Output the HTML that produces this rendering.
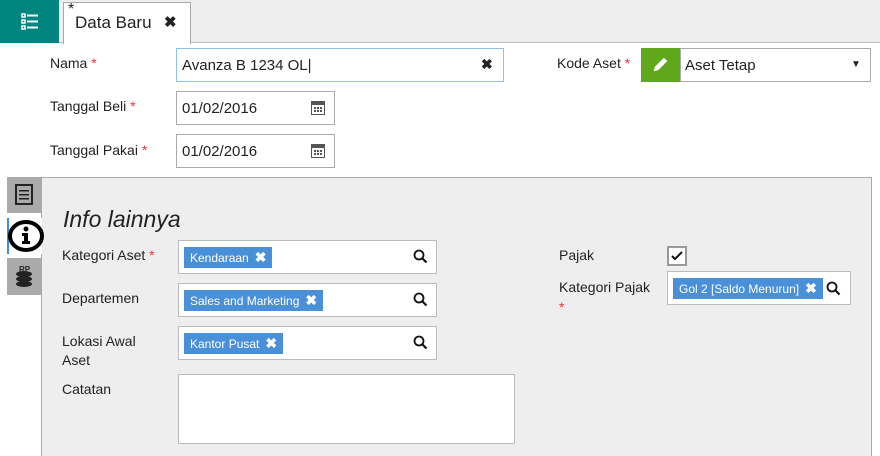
<!DOCTYPE html><html><head><style>
*{box-sizing:border-box;margin:0;padding:0}
html,body{width:880px;height:456px;overflow:hidden}
body{background:#fff;font-family:"Liberation Sans",sans-serif;font-size:14px;color:#222;position:relative}
.a{position:absolute}
.lbl{position:absolute;font-size:14px;color:#222}
.req{color:#e33}
.inp{position:absolute;background:#fff;border:1px solid #bbb}
.tag{position:absolute;background:#4a90d9;color:#fff;font-size:12px;height:21px;line-height:21px;padding:0 6px;white-space:nowrap}
.tag b{font-size:14px;margin-left:6px}
</style></head><body>
<div class="a" style="left:0;top:0;width:880px;height:43px;background:#eee;border-bottom:1px solid #bbb"></div>
<div class="a" style="left:0;top:0;width:59px;height:43px;background:#00847f">
<svg class="a" style="left:21px;top:13px" width="18" height="17" viewBox="0 0 18 17"><g fill="none" stroke="#fff" stroke-width="1.5"><rect x="1" y="1" width="3" height="3"/><rect x="1" y="7" width="3" height="3"/><rect x="1" y="13" width="3" height="3"/></g><g fill="#fff"><rect x="6" y="1.5" width="11" height="2"/><rect x="6" y="7.5" width="11" height="2"/><rect x="6" y="13.5" width="11" height="2"/></g></svg></div>
<div class="a" style="left:63px;top:2px;width:128px;height:42px;background:#fff;border:1px solid #aaa;border-bottom:none"></div>
<div class="a" style="left:68px;top:1px;font-size:16px">*</div>
<div class="a" style="left:75px;top:13px;font-size:17px;color:#222">Data Baru</div>
<div class="a" style="left:164px;top:13px;font-size:15px;font-weight:bold">✖</div>

<div class="lbl" style="left:50px;top:55px">Nama <span class="req">*</span></div>
<div class="inp" style="left:176px;top:48px;width:328px;height:34px;border-color:#8ec1ee"></div>
<div class="a" style="left:182px;top:57px;font-size:15px">Avanza B 1234 OL<span style="font-weight:100">|</span></div>
<div class="a" style="left:481px;top:56px;font-size:14px;font-weight:bold">✖</div>

<div class="lbl" style="left:50px;top:98px">Tanggal Beli <span class="req">*</span></div>
<div class="inp" style="left:176px;top:91px;width:159px;height:34px;border-color:#aaa"></div>
<div class="a" style="left:182px;top:100px;font-size:15px">01/02/2016</div>
<div class="lbl" style="left:50px;top:142px">Tanggal Pakai <span class="req">*</span></div>
<div class="inp" style="left:176px;top:134px;width:159px;height:34px;border-color:#aaa"></div>
<div class="a" style="left:182px;top:143px;font-size:15px">01/02/2016</div>
<svg class="a" style="left:311px;top:100px" width="14" height="15"><rect x="0.5" y="1.5" width="13" height="13" fill="#fff" stroke="#555"/><rect x="0" y="1" width="14" height="4" fill="#555"/><g fill="#555"><rect x="3" y="7" width="2" height="2"/><rect x="6" y="7" width="2" height="2"/><rect x="9" y="7" width="2" height="2"/><rect x="3" y="10" width="2" height="2"/><rect x="6" y="10" width="2" height="2"/><rect x="9" y="10" width="2" height="2"/></g></svg>
<svg class="a" style="left:311px;top:143px" width="14" height="15"><rect x="0.5" y="1.5" width="13" height="13" fill="#fff" stroke="#555"/><rect x="0" y="1" width="14" height="4" fill="#555"/><g fill="#555"><rect x="3" y="7" width="2" height="2"/><rect x="6" y="7" width="2" height="2"/><rect x="9" y="7" width="2" height="2"/><rect x="3" y="10" width="2" height="2"/><rect x="6" y="10" width="2" height="2"/><rect x="9" y="10" width="2" height="2"/></g></svg>

<div class="lbl" style="left:557px;top:55px">Kode Aset <span class="req">*</span></div>
<div class="a" style="left:641px;top:48px;width:40px;height:34px;background:#5fa81c"></div>
<svg class="a" style="left:652px;top:56px" width="17" height="17" viewBox="0 0 15 15"><path d="M1.5 13.5 L2.5 9.5 L10.5 1.5 L13.5 4.5 L5.5 12.5 Z" fill="#fff"/></svg>
<div class="inp" style="left:680px;top:48px;width:191px;height:34px;border-color:#aaa"></div>
<div class="a" style="left:685px;top:57px;font-size:15px">Aset Tetap</div>
<div class="a" style="left:851px;top:59px;font-size:10px">▼</div>

<div class="a" style="left:41px;top:177px;width:831px;height:300px;background:#eee;border:1px solid #aaa"></div>
<div class="a" style="left:7px;top:177px;width:34px;height:36px;background:#aaa"></div>
<svg class="a" style="left:15px;top:184px" width="18" height="21"><rect x="1" y="1" width="16" height="19" fill="none" stroke="#222" stroke-width="2"/><g fill="#222"><rect x="4" y="6" width="10" height="1.5"/><rect x="4" y="10" width="10" height="1.5"/><rect x="4" y="14" width="10" height="1.5"/></g></svg>
<div class="a" style="left:7px;top:218px;width:35px;height:36px;background:#fff;border-left:2px solid #3a8fd9"></div>
<svg class="a" style="left:5px;top:219px" width="42" height="34"><ellipse cx="21" cy="17" rx="16" ry="14" fill="#fff" stroke="#000" stroke-width="4"/><circle cx="21" cy="10" r="2.5"/><path d="M17 14h6v8h2v3h-8v-3h2v-5h-2z"/></svg>
<div class="a" style="left:7px;top:258px;width:34px;height:37px;background:#aaa"></div>
<svg class="a" style="left:13px;top:264px" width="22" height="24"><g fill="#222"><ellipse cx="11" cy="10" rx="8" ry="3"/><ellipse cx="11" cy="15" rx="8" ry="3"/><ellipse cx="11" cy="20" rx="8" ry="3"/></g><text x="6" y="8" font-size="8" font-family="Liberation Sans" font-weight="bold" fill="#222">RP</text></svg>

<div class="a" style="left:63px;top:206px;font-size:23px;font-style:italic;color:#222">Info lainnya</div>

<div class="lbl" style="left:62px;top:247px">Kategori Aset <span class="req">*</span></div>
<div class="inp" style="left:178px;top:240px;width:259px;height:34px"></div>
<div class="tag" style="left:184px;top:247px">Kendaraan<b>✖</b></div>
<div class="lbl" style="left:62px;top:290px">Departemen</div>
<div class="inp" style="left:178px;top:283px;width:259px;height:34px"></div>
<div class="tag" style="left:184px;top:290px">Sales and Marketing<b>✖</b></div>
<div class="lbl" style="left:62px;top:332px;line-height:19px">Lokasi Awal<br>Aset</div>
<div class="inp" style="left:178px;top:326px;width:259px;height:34px"></div>
<div class="tag" style="left:184px;top:333px">Kantor Pusat<b>✖</b></div>
<div class="lbl" style="left:62px;top:381px">Catatan</div>
<div class="inp" style="left:178px;top:374px;width:337px;height:70px"></div>

<svg class="a" style="left:413px;top:249px" width="15" height="15"><circle cx="6" cy="6" r="4.5" fill="none" stroke="#111" stroke-width="1.8"/><path d="M9.5 9.5l4 4" stroke="#111" stroke-width="2.2"/></svg>
<svg class="a" style="left:413px;top:292px" width="15" height="15"><circle cx="6" cy="6" r="4.5" fill="none" stroke="#111" stroke-width="1.8"/><path d="M9.5 9.5l4 4" stroke="#111" stroke-width="2.2"/></svg>
<svg class="a" style="left:413px;top:335px" width="15" height="15"><circle cx="6" cy="6" r="4.5" fill="none" stroke="#111" stroke-width="1.8"/><path d="M9.5 9.5l4 4" stroke="#111" stroke-width="2.2"/></svg>

<div class="lbl" style="left:559px;top:247px">Pajak</div>
<div class="a" style="left:667px;top:246px;width:20px;height:20px;background:#fff;border:2px solid #999"></div>
<svg class="a" style="left:670px;top:249px" width="14" height="14"><path d="M2 7l3 3 7-7" fill="none" stroke="#111" stroke-width="2"/></svg>
<div class="lbl" style="left:559px;top:277px;line-height:20px">Kategori Pajak<br><span class="req">*</span></div>
<div class="inp" style="left:667px;top:271px;width:184px;height:34px"></div>
<div class="tag" style="left:673px;top:278px">Gol 2 [Saldo Menurun]<b>✖</b></div>
<svg class="a" style="left:826px;top:281px" width="15" height="15"><circle cx="6" cy="6" r="4.5" fill="none" stroke="#111" stroke-width="1.8"/><path d="M9.5 9.5l4 4" stroke="#111" stroke-width="2.2"/></svg>
</body></html>
